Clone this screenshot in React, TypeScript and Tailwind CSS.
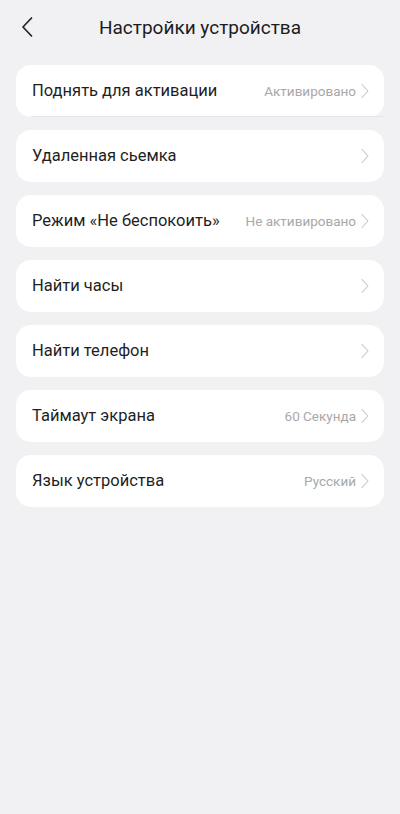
import React from 'react';

interface Row {
  label: string;
  value?: string;
  divider?: boolean;
}

const rows: Row[] = [
  { label: 'Поднять для активации', value: 'Активировано', divider: true },
  { label: 'Удаленная сьемка' },
  { label: 'Режим «Не беспокоить»', value: 'Не активировано' },
  { label: 'Найти часы' },
  { label: 'Найти телефон' },
  { label: 'Таймаут экрана', value: '60 Секунда' },
  { label: 'Язык устройства', value: 'Русский' },
];

const Chevron = () => (
  <svg width="8" height="16" viewBox="0 0 8 16" fill="none" className="ml-[5px]">
    <path d="M1 1.5 L7 8 L1 14.5" stroke="#c6c6c8" strokeWidth="1.1" strokeLinecap="round" strokeLinejoin="round" />
  </svg>
);

export default function App() {
  return (
    <div className="w-[400px] h-[814px] bg-[#f1f1f3] font-['Roboto',sans-serif]">
      <header className="relative h-[54px] flex items-center justify-center">
        <button className="absolute left-[20px] top-[16px]" aria-label="Назад">
          <svg width="14" height="22" viewBox="0 0 14 22" fill="none">
            <path d="M11.5 2 L3 11 L11.5 20" stroke="#222" strokeWidth="1.7" strokeLinecap="round" strokeLinejoin="round" />
          </svg>
        </button>
        <h1 className="text-[19px] text-[#1c1c1e] leading-none">Настройки устройства</h1>
      </header>
      <div className="flex flex-col gap-[13px] px-[16px] pt-[11px]">
        {rows.map((r) => (
          <div key={r.label} className="relative h-[52px] bg-white rounded-[15px] flex items-center pl-[16px] pr-[15px]">
            <span className="flex-1 text-[16.5px] text-[#1f1f1f]">{r.label}</span>
            {r.value && <span className="text-[13.5px] text-[#a8a8aa]">{r.value}</span>}
            <Chevron />
            {r.divider && (
              <div className="absolute left-[15px] right-0 bottom-0 h-[1.5px] bg-[#e6e6e8]" />
            )}
          </div>
        ))}
      </div>
    </div>
  );
}
